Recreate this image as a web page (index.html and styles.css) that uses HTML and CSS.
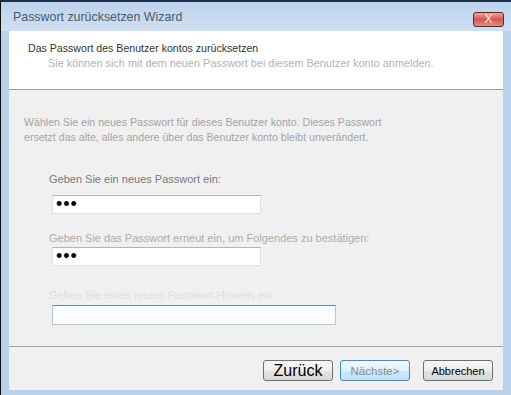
FILE: index.html
```html
<!DOCTYPE html>
<html lang="de">
<head>
<meta charset="UTF-8">
<meta name="viewport" content="width=device-width, initial-scale=1.0">
<title>Passwort zurücksetzen Wizard</title>
<link rel="stylesheet" href="styles.css">
</head>
<body>

<div class="window">
    <div class="titlebar">
        <span class="title">Passwort zurücksetzen Wizard</span>
        <span class="close">X</span>
    </div>
    <div class="panel">
        <div class="header">
            <h1>Das Passwort des Benutzer kontos zurücksetzen</h1>
            <p>Sie können sich mit dem neuen Passwort bei diesem Benutzer konto anmelden.</p>
        </div>
        <form class="body" action="#" method="post">
            <p class="intro">Wählen Sie ein neues Passwort für dieses Benutzer konto. Dieses Passwort<br>ersetzt das alte, alles andere über das Benutzer konto bleibt unverändert.</p>
            <div class="field first">
                <label for="newPassword">Geben Sie ein neues Passwort ein:</label>
                <input type="password" id="newPassword" value="abc">
            </div>
            <div class="field second">
                <label for="confirmPassword">Geben Sie das Passwort erneut ein, um Folgendes zu bestätigen:</label>
                <input type="password" id="confirmPassword" value="abc">
            </div>
            <div class="field third">
                <label for="hint">Geben Sie einen neuen Passwort-Hinweis ein:</label>
                <input type="text" id="hint" class="hint">
            </div>
        </form>
        <div class="footer">
            <button type="button" class="btn back">Zurück</button>
            <button type="button" class="btn next">Nächste&gt;</button>
            <button type="button" class="btn cancel">Abbrechen</button>
        </div>
    </div>
</div>

</body>
</html>
```

FILE: styles.css
```css
body {
    font-family: "Liberation Sans", Arial, sans-serif;
    margin: 0;
    padding: 0;
    background-color: #b9d1ea;
}
.window {
    height: 395px;
    box-sizing: border-box;
    border-top: 2px solid #1e2d4a;
    border-left: 1px solid #111;
    display: flex;
    flex-direction: column;
    background: linear-gradient(#c0d5ee, #b9d1ea 40px);
}
.titlebar {
    height: 29px;
    display: flex;
    align-items: center;
    justify-content: space-between;
    padding: 0 7px 0 12px;
    background: linear-gradient(#bcd2ed, #cfe0f3);
}
.title {
    font-size: 12.4px;
    color: #4c5a6c;
}
.close {
    width: 29px;
    height: 13px;
    margin-top: 5px;
    border: 1px solid #5a2a2a;
    border-radius: 3px;
    background: linear-gradient(#eaa59d, #d25a4e 50%, #e48c82);
    color: #fbe9e7;
    font-size: 12px;
    line-height: 13px;
    text-align: center;
}
.panel {
    flex: 1;
    margin: 0 8px 5px 8px;
    background-color: #f0f0f0;
    display: flex;
    flex-direction: column;
}
.header {
    height: 58px;
    background-color: #fff;
    border-bottom: 1px solid #a0a0a0;
    padding-left: 19px;
}
.header h1 {
    margin: 10px 0 0;
    font-size: 10.6px;
    font-weight: normal;
    line-height: 15px;
    color: #333;
}
.header p {
    margin: 0 0 0 20px;
    font-size: 10.9px;
    line-height: 15px;
    color: #b2b2b2;
}
.body {
    flex: 1;
    padding-left: 15px;
}
.intro {
    margin: 25px 0 0;
    font-size: 10.6px;
    line-height: 15px;
    color: #a4a4a4;
}
.field {
    padding-left: 25px;
}
.field label {
    display: block;
    font-size: 11px;
    line-height: 15px;
}
.field input {
    display: block;
    box-sizing: border-box;
    width: 209px;
    height: 19px;
    margin-left: 3px;
    padding: 0 3px;
    background-color: #fff;
    border: 1px solid #e0e0e0;
    border-top-color: #b4b4b4;
    font-family: "Liberation Sans", Arial, sans-serif;
    font-size: 18px;
    letter-spacing: 1px;
    color: #000;
}
.field.first {
    margin-top: 27px;
}
.field.first label {
    color: #7a7a7a;
    margin-bottom: 8px;
}
.field.second {
    margin-top: 17px;
}
.field.second label {
    color: #acacac;
    margin-bottom: 1px;
}
.field.third {
    margin-top: 22px;
}
.field.third label {
    color: #dedede;
    margin-bottom: 2px;
}
.field input.hint {
    width: 284px;
    height: 20px;
    background-color: #fafdff;
    border-color: #b6c9d8;
    border-top-color: #5d88aa;
}
.footer {
    height: 44px;
    border-top: 1px solid #a0a0a0;
    display: flex;
    justify-content: flex-end;
    align-items: flex-start;
    padding: 13px 10px 0 0;
    box-sizing: border-box;
}
.btn {
    width: 70px;
    height: 21px;
    padding: 0;
    border: 1px solid #707070;
    border-radius: 3px;
    background: linear-gradient(#f6f6f6, #eeeeee 50%, #e4e4e4 51%, #d8d8d8);
    font-family: "Liberation Sans", Arial, sans-serif;
    color: #000;
}
.btn.back {
    font-size: 16px;
}
.btn.next {
    margin-left: 7px;
    font-size: 11.5px;
    color: #8a8a8a;
    border-color: #3c8fcc;
    background: linear-gradient(#eef8fe, #e0f2fc 50%, #cdeafb 51%, #bde2f7);
}
.btn.cancel {
    margin-left: 13px;
    font-size: 11px;
}
```
